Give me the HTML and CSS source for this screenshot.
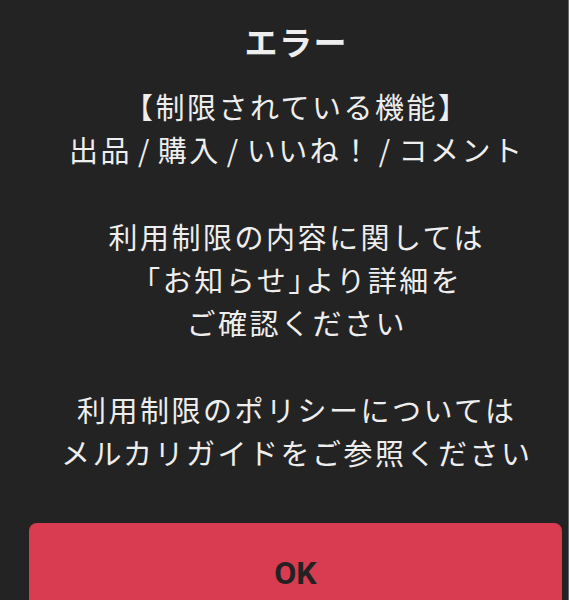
FILE: index.html
```html
<!DOCTYPE html>
<html lang="ja">
<head>
<meta charset="utf-8">
<link rel="stylesheet" href="styles.css">
</head>
<body>
<div class="dialog">
  <h1 class="title">エラー</h1>
  <p class="message">【制限されている機能】<br>出品 / 購入 / いいね！ / コメント<br><br>利用制限の内容に関しては<br>「お知らせ<span class="half">」</span>より詳細を<br>ご確認ください<br><br>利用制限のポリシーについては<br>メルカリガイドをご参照ください</p>
  <button class="ok">OK</button>
</div>
</body>
</html>
```
FILE: styles.css
```css
html, body {
  margin: 0;
  padding: 0;
  height: 100%;
  background: #232323;
  overflow: hidden;
}
.dialog {
  box-sizing: border-box;
  width: 569px;
  height: 600px;
  border-right: 1px solid #6a6a6a;
  padding: 21px 6px 0 29px;
  display: flex;
  flex-direction: column;
  align-items: stretch;
  font-family: "Noto Sans CJK JP", "Noto Sans", sans-serif;
  color: #eeeeee;
  text-align: center;
}
.title {
  margin: 0;
  font-size: 33px;
  line-height: 40px;
  font-weight: 700;
  letter-spacing: 1.5px;
  padding-left: 1.5px;
}
.message {
  margin: 24px 0 0;
  font-size: 29px;
  line-height: 43.3px;
  font-weight: 400;
  letter-spacing: 2.5px;
  word-spacing: -3px;
  padding-left: 2.5px;
}
.half {
  font-feature-settings: "halt" 1;
}
.ok {
  margin-top: 48px;
  height: 100px;
  flex: none;
  border: none;
  border-radius: 8px;
  background: #d93c50;
  color: #222222;
  font-family: "Roboto", "Noto Sans CJK JP", sans-serif;
  font-weight: 700;
  font-size: 32px;
  padding: 0;
}
```
